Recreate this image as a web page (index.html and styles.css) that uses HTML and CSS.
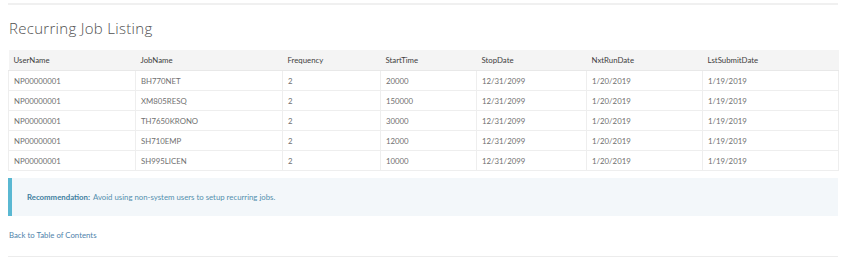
FILE: index.html
```html
<!DOCTYPE html>
<html>
<head>
<meta charset="utf-8">
<link rel="stylesheet" href="styles.css">
</head>
<body>
<div class="page">
  <div class="rule top"></div>
  <h2 class="title">Recurring Job Listing</h2>
  <table class="jobs">
    <colgroup>
      <col class="c1"><col class="c2"><col class="c3"><col class="c4"><col class="c5"><col class="c6"><col class="c7">
    </colgroup>
    <thead>
      <tr><th>UserName</th><th>JobName</th><th>Frequency</th><th>StartTime</th><th>StopDate</th><th>NxtRunDate</th><th>LstSubmitDate</th></tr>
    </thead>
    <tbody>
      <tr><td>NP00000001</td><td>BH770NET</td><td>2</td><td>20000</td><td>12/31/2099</td><td>1/20/2019</td><td>1/19/2019</td></tr>
      <tr><td>NP00000001</td><td>XM805RESQ</td><td>2</td><td>150000</td><td>12/31/2099</td><td>1/20/2019</td><td>1/19/2019</td></tr>
      <tr><td>NP00000001</td><td>TH7650KRONO</td><td>2</td><td>30000</td><td>12/31/2099</td><td>1/20/2019</td><td>1/19/2019</td></tr>
      <tr><td>NP00000001</td><td>SH710EMP</td><td>2</td><td>12000</td><td>12/31/2099</td><td>1/20/2019</td><td>1/19/2019</td></tr>
      <tr><td>NP00000001</td><td>SH995LICEN</td><td>2</td><td>10000</td><td>12/31/2099</td><td>1/20/2019</td><td>1/19/2019</td></tr>
    </tbody>
  </table>
  <div class="callout"><strong>Recommendation:</strong> Avoid using non-system users to setup recurring jobs.</div>
  <a class="back" href="#">Back to Table of Contents</a>
  <div class="rule bottom"></div>
</div>
</body>
</html>
```
FILE: styles.css
```css
html, body { margin: 0; padding: 0; background: #fff; }
body { font-family: Lato, "Open Sans", sans-serif; }
.page { width: 830px; margin-left: 8px; padding-top: 3px; display: flex; flex-direction: column; align-items: stretch; }
.rule { height: 2px; background: #f0f0f0; }
.title { margin: 13px 0 0 1px; height: 20px; line-height: 20px; font-family: "Open Sans", sans-serif; font-weight: 300; font-size: 15px; color: #505050; letter-spacing: 0.3px; }
.jobs { margin-top: 12px; width: 830px; border-collapse: collapse; table-layout: fixed; font-size: 7.8px; }
.c1 { width: 127px; } .c2 { width: 147px; } .c3 { width: 98px; } .c4 { width: 96px; }
.c5 { width: 110px; } .c6 { width: 116px; } .c7 { width: 136px; }
.jobs th { background: #f4f4f4; color: #3e3e3e; font-weight: 400; text-align: left; height: 20px; padding: 0 5px; border-bottom: 1px solid #e8e8e8; }
.jobs td { height: 19px; padding: 0 5px; color: #707070; border: 1px solid #eeeeee; border-top: none; }
.callout { margin-top: 7px; height: 38px; display: flex; align-items: center; padding-left: 15px; background: #f3f7fa; border-left: 4px solid #5ab8d2; font-size: 7.8px; color: #5390ae; }
.callout strong { font-weight: 700; color: #3f809f; margin-right: 3px; }
.back { margin-top: 12px; height: 14px; line-height: 14px; font-size: 7.8px; color: #4f83ab; text-decoration: none; padding-left: 1px; }
.rule.bottom { margin-top: 14px; height: 1px; background: #ececec; }
```
